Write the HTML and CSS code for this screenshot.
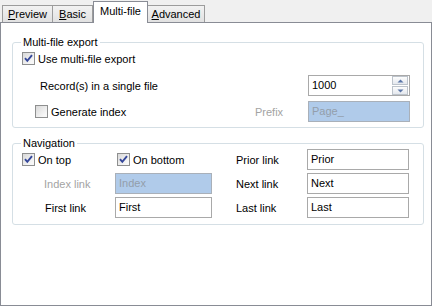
FILE: index.html
```html
<!DOCTYPE html>
<html>
<head>
<meta charset="utf-8">
<link rel="stylesheet" href="styles.css">
</head>
<body>
<div class="tabs">
  <div class="tab t-preview"><u>P</u>review</div>
  <div class="tab t-basic"><u>B</u>asic</div>
  <div class="tab t-multi active">Multi-file</div>
  <div class="tab t-adv"><u>A</u>dvanced</div>
</div>
<div class="panel">
  <div class="group g1">
    <span class="legend">Multi-file export</span>
    <div class="row r1">
      <label class="chk"><span class="box"><svg width="11" height="11" viewBox="0 0 11 11"><path d="M2 5.2 L4.3 7.8 L9 2.2" fill="none" stroke="#34479a" stroke-width="1.9"/></svg></span>Use multi-file export</label>
    </div>
    <div class="row r2">
      <span class="lbl rec">Record(s) in a single file</span>
      <div class="field spin"><span class="val">1000</span>
        <div class="btns">
          <span class="sb"><svg width="7" height="4" viewBox="0 0 7 4"><path d="M0.5 3.5 L3.5 0.5 L6.5 3.5Z" fill="#5b76a8"/></svg></span>
          <span class="sb"><svg width="7" height="4" viewBox="0 0 7 4"><path d="M0.5 0.5 L3.5 3.5 L6.5 0.5Z" fill="#5b76a8"/></svg></span>
        </div>
      </div>
    </div>
    <div class="row r3">
      <label class="chk gen"><span class="box"></span>Generate index</label>
      <span class="lbl dis prefix">Prefix</span>
      <div class="field disabled wide">Page_</div>
    </div>
  </div>
  <div class="group g2">
    <span class="legend">Navigation</span>
    <div class="nav">
      <label class="chk"><span class="box"><svg width="11" height="11" viewBox="0 0 11 11"><path d="M2 5.2 L4.3 7.8 L9 2.2" fill="none" stroke="#34479a" stroke-width="1.9"/></svg></span>On top</label>
      <label class="chk onbottom"><span class="box"><svg width="11" height="11" viewBox="0 0 11 11"><path d="M2 5.2 L4.3 7.8 L9 2.2" fill="none" stroke="#34479a" stroke-width="1.9"/></svg></span>On bottom</label>
      <span class="lbl right">Prior link</span>
      <div class="field">Prior</div>

      <span class="lbl dis left">Index link</span>
      <div class="field disabled">Index</div>
      <span class="lbl right">Next link</span>
      <div class="field">Next</div>

      <span class="lbl left first">First link</span>
      <div class="field">First</div>
      <span class="lbl right">Last link</span>
      <div class="field">Last</div>
    </div>
  </div>
</div>
</body>
</html>
```
FILE: styles.css
```css
* { box-sizing: border-box; }
html, body { margin: 0; padding: 0; }
body {
  background: #f0f0f0;
  font-family: "Liberation Sans", Arial, sans-serif;
  font-size: 11px;
  color: #000;
  width: 432px;
  height: 306px;
  overflow: hidden;
}
.tabs {
  height: 22px;
  display: flex;
  align-items: flex-end;
  padding-left: 2px;
}
.tab {
  height: 17px;
  line-height: 16px;
  text-align: center;
  border: 1px solid #9c9c9c;
  border-bottom: none;
  background: linear-gradient(#f2f2f2, #e1e1e1);
}
.tab u { text-decoration: underline; }
.t-preview { width: 51px; }
.t-basic { width: 40px; border-left: none; width: 40px; }
.t-adv { width: 57px; border-left: none; }
.tab.active {
  width: 55px;
  height: 22px;
  line-height: 19px;
  margin-bottom: -1px;
  background: #fff;
  border-color: #898c95;
  position: relative;
  z-index: 1;
}
.panel {
  height: 284px;
  background: #fff;
  border: 1px solid #898c95;
  padding-top: 19px;
  padding-left: 11px;
}
.group {
  position: relative;
  width: 412px;
  border: 1px solid #d5dfe5;
  border-radius: 3px;
  padding-left: 9px;
}
.legend {
  position: absolute;
  top: -8px;
  left: 8px;
  padding: 0 2px;
  line-height: 14px;
  background: #fff;
}
.g1 {
  height: 86px;
  padding-top: 9px;
}
.row { display: flex; align-items: center; }
.r1 { height: 13px; }
.r2 { height: 21px; margin-top: 10px; }
.r3 { height: 21px; margin-top: 5px; }
.chk {
  display: flex;
  align-items: center;
  gap: 3px;
  white-space: nowrap;
}
.box {
  width: 13px;
  height: 13px;
  border: 1px solid #8e8f8f;
  background: linear-gradient(135deg, #d9d9d9, #f7f7f7 80%);
  display: flex;
  align-items: center;
  justify-content: center;
}
.box svg { display: block; }
.lbl { white-space: nowrap; }
.dis { color: #a3a3a3; }
.rec { margin-left: 18px; width: 268px; }
.gen { margin-left: 13px; width: 220px; }
.prefix { width: 53px; }
.field {
  height: 21px;
  border: 1px solid #a9a9a9;
  background: #fff;
  padding-left: 3px;
  line-height: 19px;
  white-space: nowrap;
}
.wide, .spin { width: 102px; }
.field.disabled {
  background: #b0cbea;
  border-color: #a9b0b9;
  color: #939eab;
}
.spin {
  display: flex;
  justify-content: space-between;
  padding-right: 1px;
}
.btns {
  display: flex;
  flex-direction: column;
  gap: 1px;
  padding-top: 0;
}
.sb {
  width: 16px;
  height: 9px;
  border: 1px solid #bcc3cb;
  background: linear-gradient(#fdfdfd, #e4e8ee);
  display: flex;
  align-items: center;
  justify-content: center;
}
.sb svg { display: block; }
.g2 {
  margin-top: 15px;
  height: 82px;
  padding-top: 5px;
}
.nav {
  display: grid;
  grid-template-columns: 93px 97px 95px 102px;
  grid-auto-rows: 21px;
  row-gap: 3px;
  align-items: center;
}
.onbottom { margin-left: 2px; }
.right { padding-left: 24px; }
.left { padding-left: 22px; }
.first { padding-left: 23px; }
```
